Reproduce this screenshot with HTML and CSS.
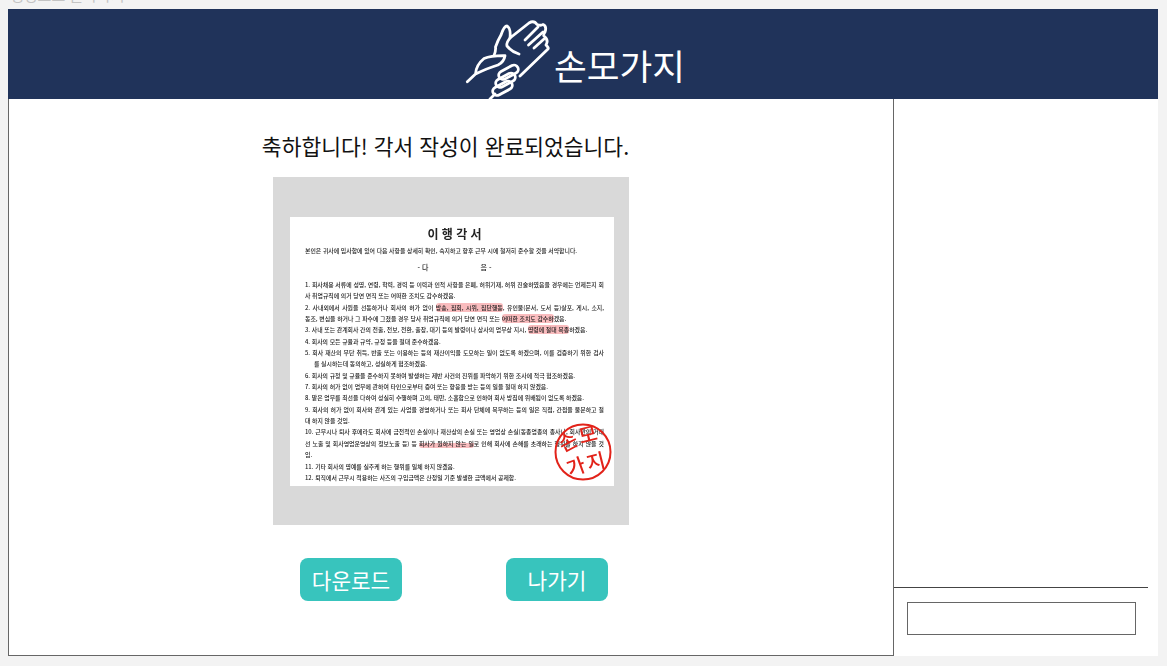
FILE: index.html
```html
<!DOCTYPE html>
<html lang="ko">
<head>
<meta charset="utf-8">
<title>손모가지</title>
<link rel="stylesheet" href="styles.css">
</head>
<body>
<div class="crumb"><span>생성으로 돌아가기</span></div>
<div class="app">
  <header class="header">
    <svg class="logo" viewBox="0 0 100 88" width="100" height="88" aria-hidden="true">
      <g fill="none" stroke="#fff" stroke-width="2.800" stroke-linecap="round" stroke-linejoin="round">
        <path d="M7.300 66.700 L15.500 59 Q16 50 24 43.500 Q31 40.500 45 40.700 Q44 47 38 50 Q28 53 15.500 59"/>
        <path d="M34 40.500 Q36 36 35.500 32 Q38 25 41 20 Q44 11 47 11 Q51 13 50 23 L69 8 Q74 5 77 9.500 Q81 11 83 9.500 Q87 11 85 17 Q83 20 84 21 Q89 25 86 30 Q89 33 88 34 L60 61"/>
        <path d="M50 23 Q46 28 47 31 Q52 37 59 39"/>
        <path d="M65 25 L78 12"/>
        <path d="M68.500 30 L83 17"/>
        <path d="M74 33 L84 24"/>
        <path d="M30 84 L35 79"/>
        <rect x="38" y="53" width="21" height="8.500" rx="4.250" transform="rotate(-28 48.500 57.250)"/>
        <rect x="35" y="61" width="21" height="8.500" rx="4.250" transform="rotate(-28 45.500 65.250)"/>
        <rect x="32" y="69" width="21" height="8.500" rx="4.250" transform="rotate(-28 42.500 73.250)"/>
      </g>
    </svg>
    <span class="brand">손모가지</span>
  </header>
  <div class="body-row">
    <main class="main">
      <h1 class="title">축하합니다! 각서 작성이 완료되었습니다.</h1>
      <div class="preview">
        <article class="doc">
          <h2 class="doc-title">이 행 각 서</h2>
          <p class="intro">본인은 귀사에 입사함에 있어 다음 사항을 상세히 확인, 숙지하고 향후 근무 시에 철저히 준수할 것을 서약합니다.</p>
          <p class="next">- 다<span class="next-gap"></span>음 -</p>
          <div class="row">1. 회사채용 서류에 성명, 연령, 학력, 경력 등 이력과 인적 사항을 은폐, 허위기재, 허위 진술하였음을 경우에는 언제든지 회</div>
          <div class="row end">사 취업규칙에 의거 당연 면직 또는 어떠한 조치도 감수하겠음.</div>
          <div class="row">2. 사내외에서 사원을 선동하거나 회사의 허가 없이 <mark>방송, 집회, 시위, 집단행동</mark>, 유인물(문서, 도서 등)살포, 게시, 소지,</div>
          <div class="row end">동조, 변심을 하거나 그 파수에 그쳤을 경우 당사 취업규칙에 의거 당연 면직 또는 <mark>어떠한 조치도 감수하</mark>겠음.</div>
          <div class="row end">3. 사내 또는 관계회사 간의 전출, 전보, 전환, 출장, 대기 등의 발령이나 상사의 업무상 지시, <mark>명령에 절대 복종</mark>하겠음.</div>
          <div class="row end">4. 회사의 모든 규율과 규약, 규정 등을 절대 준수하겠음.</div>
          <div class="row">5. 회사 재산의 무단 취득, 반출 또는 이용하는 등의 재산이익을 도모하는 일이 없도록 하겠으며, 이를 검증하기 위한 검사</div>
          <div class="row end indent">를 실시하는데 동의하고, 성실하게 협조하겠음.</div>
          <div class="row end">6. 회사의 규정 및 규율을 준수하지 못하여 발생하는 제반 사건의 진위를 파악하기 위한 조사에 적극 협조하겠음.</div>
          <div class="row end">7. 회사의 허가 없이 업무에 관하여 타인으로부터 증여 또는 향응을 받는 등의 일을 절대 하지 않겠음.</div>
          <div class="row end">8. 맡은 업무를 최선을 다하여 성실히 수행하며 고의, 태만, 소홀함으로 인하여 회사 방침에 위배됨이 없도록 하겠음.</div>
          <div class="row">9. 회사의 허가 없이 회사와 관계 있는 사업을 경영하거나 또는 회사 단체에 복무하는 등의 일은 직접, 간접을 불문하고 절</div>
          <div class="row end">대 하지 않을 것임.</div>
          <div class="row">10. 근무시나 퇴사 후에라도 회사에 금전적인 손실이나 재산상의 손실 또는 영업상 손실(동종업종의 종사나, 회사만의 거래</div>
          <div class="row">선 노출 및 회사영업운영상의 정보노출 등) 등 <mark class="under">회사가 원하지 않는 일</mark>로 인해 회사에 손해를 초래하는 행위를 하지 않을 것</div>
          <div class="row end">임.</div>
          <div class="row end">11. 기타 회사의 명예를 실추케 하는 행위를 일체 하지 않겠음.</div>
          <div class="row end">12. 퇴직에서 근무시 적용하는 사즈의 구입금액은 산정일 기준 발생한 금액에서 공제함.</div>
          <svg class="stamp" viewBox="0 0 60 60" width="60" height="60" aria-hidden="true">
            <circle cx="30" cy="30" r="27.500" fill="none" stroke="#e2231a" stroke-width="2"/>
            <g class="stamp-text" fill="#e2231a" text-anchor="middle">
              <text x="15" y="27" transform="rotate(-28 15 20)">손</text>
              <text x="35" y="20" transform="rotate(-14 35 13)">모</text>
              <text x="23" y="52" transform="rotate(-20 23 45)">가</text>
              <text x="43" y="47" transform="rotate(-14 43 40)">지</text>
            </g>
          </svg>
        </article>
      </div>
      <div class="actions">
        <button class="btn" type="button">다운로드</button>
        <button class="btn" type="button">나가기</button>
      </div>
    </main>
    <aside class="side">
      <div class="chat-log"></div>
      <div class="chat-input">
        <input class="input" type="text" aria-label="메시지">
      </div>
    </aside>
  </div>
</div>
</body>
</html>
```

FILE: styles.css
```css
* { box-sizing: border-box; }
html, body { margin: 0; padding: 0; }
body {
  width: 1167px;
  height: 666px;
  overflow: hidden;
  background: #f3f3f3;
  font-family: "Noto Sans CJK KR", "Noto Sans", sans-serif;
  color: #111;
}
.crumb {
  height: 9px;
  padding: 0 0 4px 10px;
  display: flex;
  align-items: flex-end;
  overflow: hidden;
  color: #c4c4c4;
  font-size: 15px;
  line-height: 20px;
}
.app { width: 1150px; margin-left: 8px; }
.header {
  height: 90px;
  background: #20335a;
  display: flex;
  align-items: flex-start;
  overflow: hidden;
  padding-left: 452px;
}
.logo { flex: none; margin-top: 6px; }
.brand {
  margin: 29px 0 0 -6px;
  color: #fff;
  font-size: 35.600px;
  line-height: 54px;
  white-space: nowrap;
}
.body-row { display: flex; height: 557px; }
.main {
  width: 886px;
  background: #fff;
  border: 1px solid #666;
  border-top: 0;
  display: flex;
  flex-direction: column;
  align-items: center;
}
.title {
  margin: 31px 11px 0 0;
  font-size: 21.500px;
  font-weight: 400;
  line-height: 32px;
  white-space: nowrap;
}
.preview {
  margin-top: 15px;
  width: 356px;
  height: 348px;
  background: #d9d9d9;
  padding: 40px 15px 39px 17px;
}
.doc {
  position: relative;
  height: 269px;
  background: #fff;
  padding: 8px 10px 0 15px;
  color: #222;
  font-size: 5.900px;
  font-weight: 500;
  filter: blur(0.35px);
}
.doc-title {
  margin: 0;
  text-align: center;
  font-size: 12px;
  line-height: 17px;
  font-weight: 700;
  color: #222;
}
.intro { margin: 3px 0 0; line-height: 11px; white-space: nowrap; }
.next {
  margin: 6px 0;
  text-align: center;
  font-size: 7px;
  line-height: 11px;
}
.next-gap { display: inline-block; width: 52px; }
.row {
  height: 11.350px;
  line-height: 11.350px;
  white-space: nowrap;
  text-align: justify;
  text-align-last: justify;
}
.row.end { text-align-last: left; }
.row.indent { padding-left: 9px; }
mark {
  background: rgba(240, 80, 85, 0.38);
  color: inherit;
  border-radius: 3px;
}
mark.under { background: linear-gradient(transparent 45%, rgba(240, 80, 85, 0.38) 45%); }
.stamp { position: absolute; right: 1px; bottom: 4px; overflow: visible; }
.stamp-text { font-size: 20px; font-weight: 500; }
.actions {
  display: flex;
  gap: 104px;
  margin: 33px 0 0 6px;
}
.btn {
  width: 102px;
  height: 43px;
  padding: 0;
  border: 0;
  border-radius: 8px;
  background: #38c4bd;
  color: #fff;
  font: 400 21.300px "Noto Sans CJK KR", "Noto Sans", sans-serif;
}
.side {
  flex: 1;
  background: #fff;
  display: flex;
  flex-direction: column;
  padding-right: 10px;
}
.chat-log { height: 489px; border-bottom: 1px solid #444; }
.chat-input { padding: 14px 12px 0 13px; }
.input {
  display: block;
  width: 229px;
  height: 33px;
  margin: 0;
  padding: 0;
  border: 1px solid #666;
  background: #fff;
}
```
